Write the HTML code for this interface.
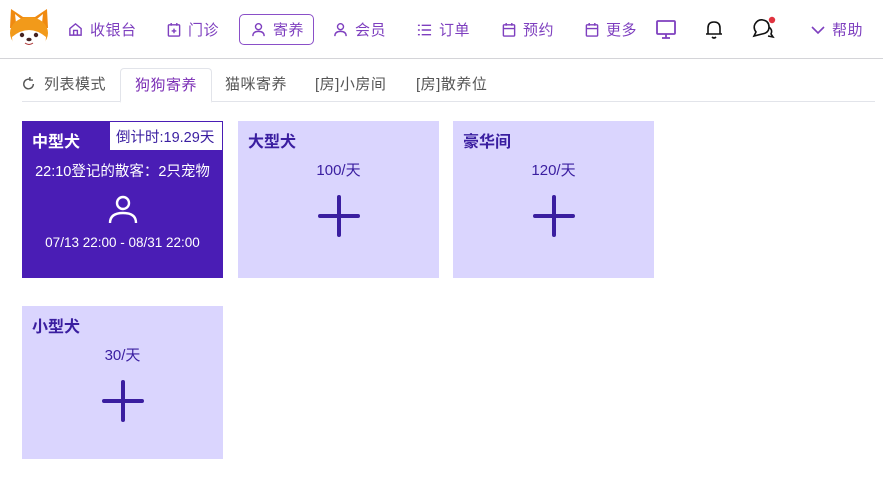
<!DOCTYPE html>
<html><head><meta charset="utf-8"><style>
*{margin:0;padding:0;box-sizing:border-box}
body{width:883px;height:497px;background:#fff;font-family:"Liberation Sans","Noto Sans CJK SC",sans-serif;position:relative;overflow:hidden}
.hdr{position:absolute;left:0;top:0;width:883px;height:59px;border-bottom:1px solid #d4d4d8;background:#fff}
.nav{position:absolute;top:14px;height:31px;display:flex;align-items:center;font-size:15px;color:#7e3fbf;white-space:nowrap;letter-spacing:0.5px}
.nav svg{margin-right:7px;flex-shrink:0}
.sel{border:1.5px solid #8a4fc8;border-radius:5px;padding:0 11px}
.tabs{position:absolute;top:68px;left:22px;width:853px;height:34px;border-bottom:1.5px solid #e2e4ea}
.tab{position:absolute;top:0;height:34px;line-height:34px;font-size:15px;color:#555;white-space:nowrap;letter-spacing:0.5px}
.tab.on{background:#fff;border:1.5px solid #e2e4ea;border-bottom:2px solid #fff;border-radius:4px 4px 0 0;color:#7b2fb5;height:35px;padding:0 14px}
.card{position:absolute;background:#dad5fe;color:#3a1ea0}
.card .t{position:absolute;left:10px;top:7px;font-size:16px;font-weight:bold}
.card .p{position:absolute;left:0;width:100%;text-align:center;top:38px;font-size:15px}
.plus{position:absolute;left:50%;top:74px;margin-left:-21px}
</style></head><body>
<div class="hdr">
<svg style="position:absolute;left:8px;top:6px" width="42" height="44" viewBox="0 0 42 44"><path d="M3 3 L15 11 L27 11 L39 3 L40 22 L2 22Z" fill="#f08a10"/><path d="M7 8 L13 13 L8 17Z M35 8 L29 13 L34 17Z" fill="#fff"/><ellipse cx="21" cy="27" rx="19" ry="16" fill="#f29a1a"/><path d="M4 31 Q21 17 38 31 Q38 44 21 44 Q4 44 4 31Z" fill="#fff"/><circle cx="14" cy="29" r="2.2" fill="#422"/><circle cx="28" cy="29" r="2.2" fill="#422"/><ellipse cx="21" cy="33.5" rx="2.6" ry="1.8" fill="#422"/><path d="M17 37 Q21 40 25 37" stroke="#a33" fill="none"/></svg>
<div class="nav" style="left:68px"><svg width="15" height="15" viewBox="0 0 16 16" fill="none" stroke="#7e3fbf" stroke-width="1.5"><path d="M2 7 L8 2 L14 7 V14 H2Z M6 14 V9 H10 V14"/></svg>收银台</div>
<div class="nav" style="left:167px"><svg width="14" height="15" viewBox="0 0 14 16" fill="none" stroke="#7e3fbf" stroke-width="1.5"><rect x="1" y="3" width="12" height="12" rx="1"/><path d="M4 1V4M10 1V4M7 7V12M4.5 9.5H9.5"/></svg>门诊</div>
<div class="nav sel" style="left:239px;width:75px"><svg width="15" height="15" viewBox="0 0 16 16" fill="none" stroke="#7e3fbf" stroke-width="1.5"><circle cx="8" cy="5" r="3.2"/><path d="M2 15 Q2 10 8 10 Q14 10 14 15"/></svg>寄养</div>
<div class="nav" style="left:333px"><svg width="15" height="15" viewBox="0 0 16 16" fill="none" stroke="#7e3fbf" stroke-width="1.5"><circle cx="8" cy="5" r="3.2"/><path d="M2 15 Q2 10 8 10 Q14 10 14 15"/></svg>会员</div>
<div class="nav" style="left:417px"><svg width="15" height="14" viewBox="0 0 16 14" fill="none" stroke="#7e3fbf" stroke-width="1.5"><path d="M1 2H3M5 2H15M1 7H3M5 7H15M1 12H3M5 12H15"/></svg>订单</div>
<div class="nav" style="left:502px"><svg width="14" height="15" viewBox="0 0 14 16" fill="none" stroke="#7e3fbf" stroke-width="1.5"><rect x="1" y="3" width="12" height="12" rx="1"/><path d="M4 1V4M10 1V4M1 7H13"/></svg>预约</div>
<div class="nav" style="left:585px"><svg width="14" height="15" viewBox="0 0 14 16" fill="none" stroke="#7e3fbf" stroke-width="1.5"><rect x="1" y="3" width="12" height="12" rx="1"/><path d="M4 1V4M10 1V4M1 7H13"/></svg>更多</div>
<svg style="position:absolute;left:656px;top:20px" width="20" height="19" viewBox="0 0 20 19" fill="none" stroke="#7e3fbf" stroke-width="1.8"><rect x="1" y="1" width="18" height="13" rx="1"/><path d="M10 14V18M6 18H14"/></svg>
<svg style="position:absolute;left:704px;top:19px" width="20" height="21" viewBox="0 0 20 21" fill="none" stroke="#111" stroke-width="1.6"><path d="M4 15V9 Q4 3 10 3 Q16 3 16 9V15H18H2Z M8 18 Q10 20 12 18"/></svg>
<svg style="position:absolute;left:751px;top:16px" width="26" height="25" viewBox="0 0 26 25" fill="none" stroke="#111" stroke-width="1.6"><path d="M3 20 L5 16 Q2 12 4 8 Q7 3 12 4 Q18 5 18 11 Q18 17 11 18Z"/><path d="M18 11 Q22 14 20 18 L22 21 L17 20"/><circle cx="21" cy="4" r="3.2" fill="#e0333f" stroke="none"/></svg>
<div class="nav" style="left:811px"><svg width="14" height="10" viewBox="0 0 14 10" fill="none" stroke="#7e3fbf" stroke-width="1.6"><path d="M1 2L7 8L13 2"/></svg>帮助</div>
</div>
<div class="tabs">
<div class="tab" style="left:0"><svg style="vertical-align:-2px;margin-right:8px" width="14" height="14" viewBox="0 0 16 16" fill="none" stroke="#555" stroke-width="1.6"><path d="M13 8 A5.5 5.5 0 1 1 9 2.7 M9 0 V3.5 H12.5"/></svg>列表模式</div>
<div class="tab on" style="left:98px">狗狗寄养</div>
<div class="tab" style="left:203px">猫咪寄养</div>
<div class="tab" style="left:293px">[房]小房间</div>
<div class="tab" style="left:394px">[房]散养位</div>
</div>
<div class="card" style="left:22px;top:121px;width:201px;height:157px;background:#4a1db5;color:#fff">
<div class="t">中型犬</div>
<div style="position:absolute;right:1px;top:1px;background:#fff;color:#3a1ea0;font-size:14.5px;padding:4px 6px;height:28px;width:112px">倒计时:19.29天</div>
<div style="position:absolute;top:39px;width:100%;text-align:center;font-size:14.5px">22:10登记的散客：2只宠物</div>
<svg style="position:absolute;left:86px;top:74px" width="30" height="29" viewBox="0 0 30 29" fill="none" stroke="#fff" stroke-width="2.4"><circle cx="15" cy="8" r="6"/><path d="M2 28 Q2 18 15 18 Q28 18 28 28"/></svg>
<div style="position:absolute;top:114px;width:100%;text-align:center;font-size:13.5px">07/13 22:00 - 08/31 22:00</div>
</div>
<div class="card" style="left:238px;top:121px;width:201px;height:157px"><div class="t">大型犬</div><div class="p">100/天</div><svg class="plus" width="42" height="42" viewBox="0 0 42 42" stroke="#3a1ea0" stroke-width="4" stroke-linecap="round"><path d="M21 2V40M2 21H40"/></svg></div>
<div class="card" style="left:453px;top:121px;width:201px;height:157px"><div class="t">豪华间</div><div class="p">120/天</div><svg class="plus" width="42" height="42" viewBox="0 0 42 42" stroke="#3a1ea0" stroke-width="4" stroke-linecap="round"><path d="M21 2V40M2 21H40"/></svg></div>
<div class="card" style="left:22px;top:306px;width:201px;height:153px"><div class="t">小型犬</div><div class="p">30/天</div><svg class="plus" width="42" height="42" viewBox="0 0 42 42" stroke="#3a1ea0" stroke-width="4" stroke-linecap="round"><path d="M21 2V40M2 21H40"/></svg></div>
</body></html>
